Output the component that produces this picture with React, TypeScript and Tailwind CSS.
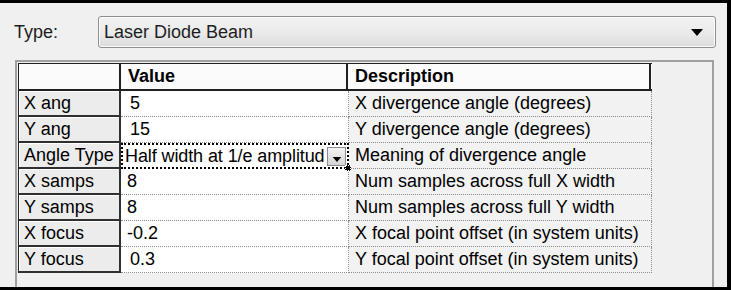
import React from 'react';

type Row = { name: string; value: string; indent?: boolean; desc: string; combo?: boolean };

const rows: Row[] = [
  { name: 'X ang', value: '5', indent: true, desc: 'X divergence angle (degrees)' },
  { name: 'Y ang', value: '15', indent: true, desc: 'Y divergence angle (degrees)' },
  { name: 'Angle Type', value: 'Half width at 1/e amplitud', desc: 'Meaning of divergence angle', combo: true },
  { name: 'X samps', value: '8', desc: 'Num samples across full X width' },
  { name: 'Y samps', value: '8', desc: 'Num samples across full Y width' },
  { name: 'X focus', value: '-0.2', desc: 'X focal point offset (in system units)' },
  { name: 'Y focus', value: '0.3', indent: true, desc: 'Y focal point offset (in system units)' },
];

function DownArrow({ className }: { className?: string }) {
  return (
    <svg className={className} viewBox="0 0 12 7" fill="#000">
      <path d="M0 0h12L6 7z" />
    </svg>
  );
}

function ValueCell({ row }: { row: Row }) {
  if (row.combo) {
    return (
      <div className="relative w-[228px] h-[26px] bg-white border-2 border-dotted border-black flex items-center">
        <span className="flex-1 pl-[2px] whitespace-nowrap overflow-hidden tracking-[-0.1px]">{row.value}</span>
        <div className="w-[19px] h-[19px] mr-[1px] shrink-0 border border-[#8a8a8a] bg-gradient-to-b from-[#f4f4f4] to-[#d4d4d4] flex items-end justify-center pb-[3px]">
          <DownArrow className="w-[10px] h-[5px]" />
        </div>
        <div className="absolute -right-[4px] -bottom-[4px] w-[6px] h-[6px] bg-black border border-dotted border-white" />
      </div>
    );
  }
  return (
    <div
      className={`w-[228px] h-[26px] bg-white border-b border-r border-dotted border-[#8c8c8c] flex items-center whitespace-pre ${
        row.indent ? 'pl-[9px]' : 'pl-[6px]'
      }`}
    >
      {row.value}
    </div>
  );
}

export default function App() {
  return (
    <div className="w-[731px] h-[290px] bg-[#f0f0f0] border-t-[3px] border-r-4 border-b-[3px] border-black overflow-hidden flex flex-col font-['Liberation_Sans',Arial,sans-serif] text-[18px] text-black">
      {/* Type selector */}
      <div className="flex items-center mt-[13px] pl-[14px]">
        <span className="w-[84px] text-[#1e1e1e]">Type:</span>
        <div className="w-[618px] h-[32px] rounded-[3px] border border-[#8e8f8f] bg-gradient-to-b from-[#f2f2f2] via-[#ebebeb] to-[#dcdcdc] flex items-center pl-[5px] pr-[12px] shadow-[inset_0_0_0_1px_#fbfbfb]">
          <span className="flex-1 text-[#1e1e1e]">Laser Diode Beam</span>
          <DownArrow className="w-[12px] h-[7px]" />
        </div>
      </div>

      {/* Property grid */}
      <div className="mt-[12px] ml-[15px] w-[699px] flex-1 border-t-2 border-l-2 border-r-2 border-[#a0a0a0] pt-[1px] pl-px">
        <div className="w-[634px] border-l border-t border-[#202020]">
          {/* Header */}
          <div className="flex h-[27px] bg-[#fbfbfb] border-b-2 border-[#202020] font-bold">
            <div className="w-[102px] border-r-2 border-[#202020]" />
            <div className="w-[227px] border-r-2 border-[#202020] pl-[7px] flex items-center">Value</div>
            <div className="w-[303px] border-r-2 border-[#202020] pl-[7px] flex items-center">Description</div>
          </div>

          {rows.map((row) => (
            <div key={row.name} className="flex h-[26px]">
              <div className="w-[102px] h-[26px] bg-[#ececec] border-r-2 border-b-2 border-[#303030] shadow-[inset_1px_1px_0_#ffffff] pl-[5px] flex items-center whitespace-nowrap">
                {row.name}
              </div>
              <ValueCell row={row} />
              <div className="w-[303px] h-[26px] bg-[#f2f2f2] border-b border-r border-dotted border-[#8c8c8c] pl-[6px] flex items-center whitespace-nowrap">
                {row.desc}
              </div>
            </div>
          ))}
        </div>
      </div>
    </div>
  );
}
